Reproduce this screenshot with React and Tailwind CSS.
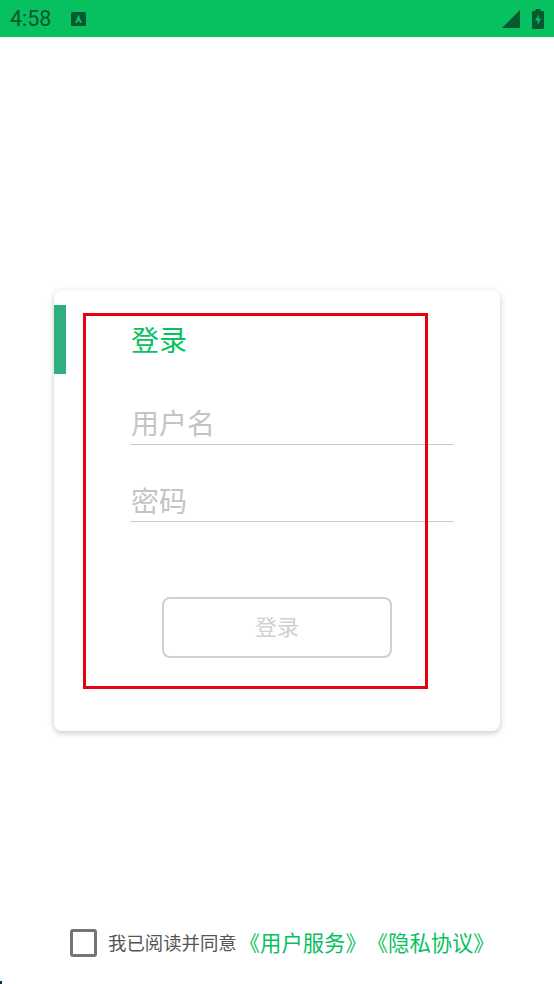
export default function App() {
  const cjk = { fontFamily: '"Noto Sans CJK SC", "Noto Sans", sans-serif' };
  return (
    <div className="relative flex h-[984px] w-[554px] flex-col overflow-hidden bg-white" style={cjk}>
      <div className="flex h-[37px] items-center bg-[#07c160] pl-[10px] pr-[9px] text-[#07572f]">
        <span className="font-['Roboto'] text-[21.5px] leading-none">4:58</span>
        <svg className="ml-[20px]" width="15" height="14" viewBox="0 0 15 14">
          <rect width="15" height="14" rx="1.5" fill="#07572f" />
          <path d="M7.5 2.5 4 11h2l.6-1.7h1.8L9 11h2L7.5 2.5Z" fill="#07c160" />
        </svg>
        <div className="ml-auto flex items-center gap-[10px]">
          <svg width="20" height="20" viewBox="0 0 20 20">
            <path d="M19 1V19H1L19 1Z" fill="#07572f" />
          </svg>
          <svg width="14" height="20" viewBox="0 0 14 20">
            <path d="M4.5 0h5v2H12a1 1 0 0 1 1 1v16a1 1 0 0 1-1 1H2a1 1 0 0 1-1-1V3a1 1 0 0 1 1-1h2.5V0Z" fill="#07572f" />
            <path d="M8 5 4 11.5h2.6V16L10 9.5H7.4L8 5Z" fill="#07c160" />
          </svg>
        </div>
      </div>

      <main className="flex flex-1 flex-col pt-[253px]">
        <section className="mx-[54px] flex h-[441px] w-[446px] rounded-[8px] bg-white shadow-[0_2px_6px_rgba(0,0,0,0.22)]">
          <div className="mt-[15px] h-[69px] w-[12px] shrink-0 bg-[#2fae80]" />
          <div className="flex flex-1 flex-col pl-[64px] pr-[46px]">
            <h1 className="mt-[29px] pl-px text-[28px] font-normal leading-[40px] text-[#07c160]">登录</h1>
            <div className="mt-[36px] h-[50px] border-b border-[#cccccc] pl-px text-[28px] leading-[54px] text-[#c4c4c4]">用户名</div>
            <div className="mt-[27px] h-[50px] border-b border-[#cccccc] pl-px text-[28px] leading-[56px] text-[#c4c4c4]">密码</div>
            <button className="ml-[32px] mt-[75px] flex h-[61px] w-[230px] items-center justify-center rounded-[8px] border-2 border-[#d0d0d0] pb-[4px] text-[22px] text-[#d0d0d0]">登录</button>
          </div>
        </section>

        <footer className="mt-[198px] flex items-center pl-[70px]">
          <div className="h-[28px] w-[27px] rounded-[3px] border-[3px] border-[#757575]" />
          <span className="ml-[11px] -translate-y-px text-[18.4px] leading-[28px] text-[#555555]">我已阅读并同意</span>
          <span className="ml-[2px] -translate-y-px text-[21.33px] leading-[28px] text-[#07c160] [text-spacing-trim:space-all]">《用户服务》《隐私协议》</span>
        </footer>
      </main>

      <div className="pointer-events-none absolute left-[83px] top-[313px] h-[376px] w-[345px] border-[3px] border-[#e60012]" />
      <div className="absolute bottom-0 left-0 h-[3px] w-[2px] bg-[#123040]" />
    </div>
  );
}
